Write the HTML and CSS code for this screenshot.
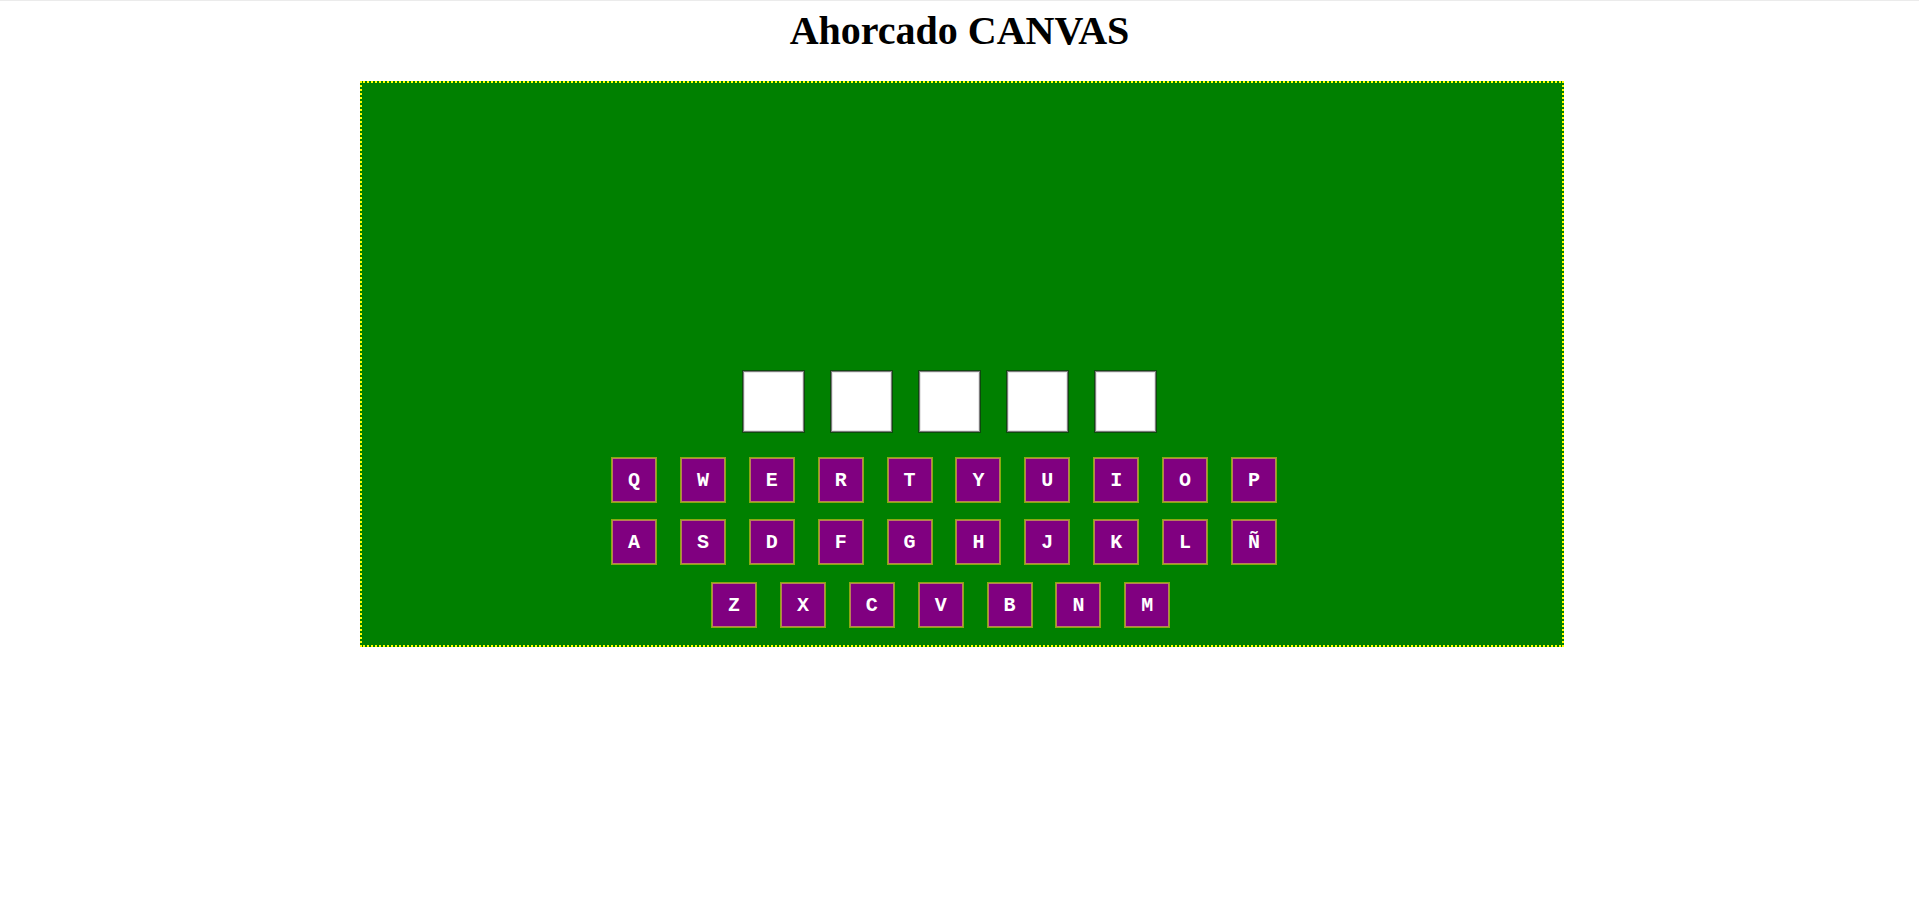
FILE: index.html
```html
<!DOCTYPE html>
<html lang="es">
<head>
<meta charset="utf-8">
<title>Ahorcado CANVAS</title>
<link rel="stylesheet" href="styles.css">
</head>
<body>
<h1 class="title">Ahorcado CANVAS</h1>
<div class="board">
  <div class="slots">
    <div class="slot"></div>
    <div class="slot"></div>
    <div class="slot"></div>
    <div class="slot"></div>
    <div class="slot"></div>
  </div>
  <div class="keys row1">
    <div class="key">Q</div><div class="key">W</div><div class="key">E</div><div class="key">R</div><div class="key">T</div><div class="key">Y</div><div class="key">U</div><div class="key">I</div><div class="key">O</div><div class="key">P</div>
  </div>
  <div class="keys row2">
    <div class="key">A</div><div class="key">S</div><div class="key">D</div><div class="key">F</div><div class="key">G</div><div class="key">H</div><div class="key">J</div><div class="key">K</div><div class="key">L</div><div class="key">Ñ</div>
  </div>
  <div class="keys row3">
    <div class="key">Z</div><div class="key">X</div><div class="key">C</div><div class="key">V</div><div class="key">B</div><div class="key">N</div><div class="key">M</div>
  </div>
</div>
</body>
</html>
```
FILE: styles.css
```css
html, body {
  margin: 0;
  padding: 0;
  background: #ffffff;
}
body {
  border-top: 1px solid #ebebeb;
  font-family: "Liberation Serif", "Times New Roman", serif;
}
.title {
  margin: 7px 0 0 0;
  font-size: 40px;
  line-height: 45px;
  font-weight: bold;
  text-align: center;
  color: #000;
}
.board {
  box-sizing: content-box;
  width: 1200px;
  height: 562px;
  margin: 28px 0 0 calc(50% - 599.5px);
  border: 2px dotted #ffff00;
  background: #008000;
  display: flex;
  flex-direction: column;
  align-items: flex-start;
}
.slots {
  display: flex;
  gap: 25px;
  margin: 287px 0 0 380px;
}
.slot {
  box-sizing: border-box;
  width: 63px;
  height: 63px;
  background: #ffffff;
  border: 1px solid #0d4a0d;
  box-shadow: inset 0 0 0 1px #7a7a7a, inset 0 0 0 2px #e6e6e6;
}
.keys {
  display: flex;
  gap: 22.9px;
}
.row1 { margin: 24px 0 0 249px; }
.row2 { margin: 16px 0 0 249px; }
.row3 { margin: 17px 0 0 349px; }
.key {
  box-sizing: border-box;
  width: 46px;
  height: 46px;
  background: #800080;
  border: 1px solid #8aaa10;
  box-shadow: inset 0 0 0 1px #b8805a;
  color: #ffffff;
  font-family: "Liberation Mono", "Courier New", monospace;
  font-weight: bold;
  font-size: 20px;
  display: flex;
  align-items: center;
  justify-content: center;
}
```
